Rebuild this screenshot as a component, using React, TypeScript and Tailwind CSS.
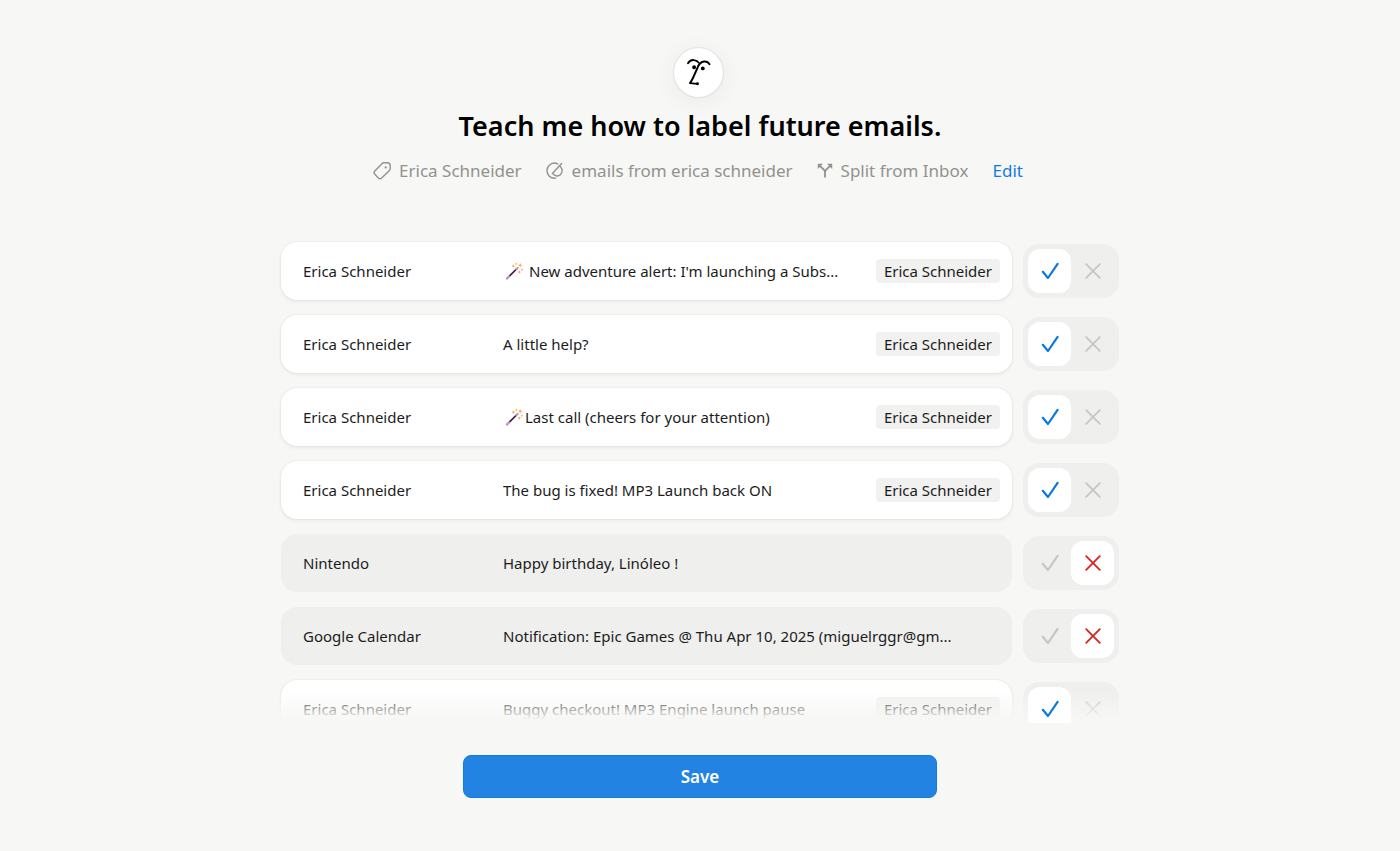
import { useState } from 'react';
import clsx from 'clsx';

interface Email {
    id: number;
    from: string;
    subject: string;
    wand?: 'spaced' | 'tight';
    matches: boolean;
}

const LABEL = 'Erica Schneider';

const initialEmails: Email[] = [
    { id: 1, from: 'Erica Schneider', subject: "New adventure alert: I'm launching a Subs...", wand: 'spaced', matches: true },
    { id: 2, from: 'Erica Schneider', subject: 'A little help?', matches: true },
    { id: 3, from: 'Erica Schneider', subject: 'Last call (cheers for your attention)', wand: 'tight', matches: true },
    { id: 4, from: 'Erica Schneider', subject: 'The bug is fixed! MP3 Launch back ON', matches: true },
    { id: 5, from: 'Nintendo', subject: 'Happy birthday, Linóleo !', matches: false },
    { id: 6, from: 'Google Calendar', subject: 'Notification: Epic Games @ Thu Apr 10, 2025 (miguelrggr@gm...', matches: false },
    { id: 7, from: 'Erica Schneider', subject: 'Buggy checkout! MP3 Engine launch pause', matches: true },
];

function FaceLogo() {
    return (
        <svg width="28" height="30" viewBox="0 0 28 30" fill="none" stroke="black" strokeWidth="1.9" strokeLinecap="round" strokeLinejoin="round" aria-hidden="true">
            <path d="M4 5.2C5.5 2.8 8 1.8 10 2.1C12.2 2.3 13.8 3.2 14.6 4.6" />
            <path d="M25.5 6.2C24.2 4.2 22.3 3.3 20.2 3.5C16.5 3.8 14.6 6.5 13.4 10L9.2 19.5C8.2 21.8 7 23.6 6 25.1L13.3 25.9" />
            <circle cx="10.1" cy="9.2" r="1" fill="black" />
            <circle cx="18.8" cy="10.4" r="1" fill="black" />
            <circle cx="13.5" cy="25.8" r="0.5" fill="black" />
        </svg>
    );
}

function TagIcon() {
    return (
        <svg width="18" height="18" viewBox="0 0 18 18" fill="none" stroke="currentColor" strokeWidth="1.4" strokeLinejoin="round" aria-hidden="true">
            <path d="M9.2 1.5C9.7 1 10.3 .8 11 .8H14.2C15.9 .8 17.2 2.1 17.2 3.8V6.5C17.2 7.2 16.9 7.9 16.4 8.4L8.7 15.9C7.7 16.9 6.4 16.9 5.4 15.9L1.8 12.3C.8 11.3 .8 10.1 1.8 9.1Z" />
            <circle cx="12.7" cy="5.4" r="1.1" fill="currentColor" stroke="none" />
        </svg>
    );
}

function TargetPenIcon() {
    return (
        <svg width="18" height="18" viewBox="0 0 18 18" fill="none" stroke="currentColor" strokeWidth="1.4" strokeLinecap="round" strokeLinejoin="round" aria-hidden="true">
            <path d="M11.8 1.9C8.8 .5 5.4 1.1 3.1 3.4C.3 6.3 .3 10.9 3.1 13.9C4.9 15.8 7.4 16.5 9.7 16.1" />
            <path d="M15.6 1.5L6.4 11.4M14.4 4.6C16.8 7.3 16.7 11 14.2 12.9C11.8 14.6 8.6 14 6.4 11.4" />
        </svg>
    );
}

function SplitIcon() {
    return (
        <svg width="16" height="16" viewBox="0 0 16 16" fill="none" stroke="currentColor" strokeWidth="1.8" aria-hidden="true">
            <path d="M8 14.5V9.5C8 8.3 7.6 7.5 6.8 6.7L2.6 2.6M8 9.5C8 8.3 8.4 7.5 9.2 6.7L13.4 2.6" />
            <path d="M.8 .8H6L.8 6ZM15.2 .8H10L15.2 6Z" fill="currentColor" stroke="none" />
        </svg>
    );
}

function WandIcon() {
    return (
        <svg width="22" height="20" viewBox="-1 0 22 20" className="shrink-0" role="img" aria-label="magic wand">
            <path d="M3 17.5L13.5 7" stroke="#4a1450" strokeWidth="1.7" strokeLinecap="round" />
            <path d="M3 17.5L5 15.5M12.3 8.2L13.5 7" stroke="#b99cc4" strokeWidth="1.8" strokeLinecap="round" />
            <g fill="#fbab5e">
                <path d="M16.2 2L16.9 3.6L18.5 4.3L16.9 5L16.2 6.6L15.5 5L13.9 4.3L15.5 3.6Z" />
                <path d="M9.3 3.2L9.9 4.5L11.2 5.1L9.9 5.7L9.3 7L8.7 5.7L7.4 5.1L8.7 4.5Z" />
                <path d="M15.3 9.2L15.9 10.5L17.2 11.1L15.9 11.7L15.3 13L14.7 11.7L13.4 11.1L14.7 10.5Z" />
                <circle cx="12.3" cy="2.9" r="0.9" />
                <circle cx="17.9" cy="8.7" r="0.9" />
            </g>
        </svg>
    );
}

function CheckIcon() {
    return (
        <svg width="18" height="18" viewBox="0 0 18 18" fill="none" stroke="currentColor" strokeWidth="2.2" strokeLinecap="round" strokeLinejoin="round" aria-hidden="true">
            <path d="M1.8 9.8L7 16L16.6 1.8" />
        </svg>
    );
}

function CrossIcon() {
    return (
        <svg width="16" height="16" viewBox="0 0 16 16" fill="none" stroke="currentColor" strokeWidth="1.8" strokeLinecap="round" aria-hidden="true">
            <path d="M1.2 1.2L14.8 14.8M14.8 1.2L1.2 14.8" />
        </svg>
    );
}

function EmailRow({ email, onChange }: { email: Email; onChange: (matches: boolean) => void }) {
    return (
        <li className="flex items-center gap-[11px]">
            <div
                className={clsx(
                    'flex h-[58px] min-w-0 flex-1 items-center rounded-2xl pl-[22px] pr-3 text-[15px] leading-6 text-[#1c1c1c]',
                    email.matches ? 'bg-white shadow-[0_0_2px_rgba(0,0,0,0.12),0_2px_4px_rgba(0,0,0,0.05)]' : 'bg-[#efefee]'
                )}
            >
                <span className="w-[200px] shrink-0 truncate">{email.from}</span>
                <span className={clsx('flex min-w-0 flex-1 items-center', email.wand === 'spaced' && 'gap-1')}>
                    {email.wand && <WandIcon />}
                    <span className="truncate">{email.subject}</span>
                </span>
                {email.matches && (
                    <span className="ml-4 shrink-0 rounded-sm bg-[#f1f1f0] px-2">{LABEL}</span>
                )}
            </div>
            <div className="flex h-[54px] shrink-0 items-center rounded-2xl bg-[#efefee] px-[5px]">
                <button
                    type="button"
                    aria-label={`Label "${email.subject}"`}
                    aria-pressed={email.matches}
                    onClick={() => onChange(true)}
                    className={clsx(
                        'flex h-11 w-[43px] items-center justify-center rounded-xl',
                        email.matches ? 'relative z-20 bg-white text-[#0878e2]' : 'text-[#c6c6c5]'
                    )}
                >
                    <CheckIcon />
                </button>
                <button
                    type="button"
                    aria-label={`Do not label "${email.subject}"`}
                    aria-pressed={!email.matches}
                    onClick={() => onChange(false)}
                    className={clsx(
                        'flex h-11 w-[43px] items-center justify-center rounded-xl',
                        email.matches ? 'text-[#c6c6c5]' : 'relative z-20 bg-white text-[#d9231f]'
                    )}
                >
                    <CrossIcon />
                </button>
            </div>
        </li>
    );
}

export default function App() {
    const [emails, setEmails] = useState(initialEmails);

    const setMatches = (id: number, matches: boolean) => {
        setEmails(emails.map((e) => (e.id === id ? { ...e, matches } : e)));
    };

    return (
        <main className="flex h-screen flex-col items-center bg-[#f7f7f5] px-6 pt-12 font-['Noto_Sans',sans-serif]">
            <header className="flex flex-col items-center">
                <div className="mr-1 flex h-[49px] w-[49px] items-center justify-center rounded-full bg-white shadow-[0_0_2px_rgba(0,0,0,0.2),0_4px_24px_rgba(0,0,0,0.06)]">
                    <FaceLogo />
                </div>
                <h1 className="mt-2 text-[27px] leading-[42px] font-semibold text-black">Teach me how to label future emails.</h1>
                <div className="mt-2 mr-1 flex items-center gap-6 text-[17px] leading-8 text-[#92928f]">
                    <span className="flex items-center gap-2"><TagIcon />Erica Schneider</span>
                    <span className="flex items-center gap-2"><TargetPenIcon />emails from erica schneider</span>
                    <span className="flex items-center gap-2"><SplitIcon />Split from Inbox</span>
                    <a href="#edit" className="text-[#0f7ce4]">Edit</a>
                </div>
            </header>

            <section className="relative mt-10 min-h-0 w-full max-w-[846px] flex-1 overflow-hidden">
                <ul className="flex h-full flex-col gap-[15px] overflow-y-auto px-1 pt-[15px] [scrollbar-width:none]">
                    {emails.map((email) => (
                        <EmailRow key={email.id} email={email} onChange={(matches) => setMatches(email.id, matches)} />
                    ))}
                </ul>
                <div className="pointer-events-none absolute inset-x-0 bottom-0 z-10 h-8 bg-linear-to-b from-[#f7f7f5]/0 to-[#f7f7f5] to-90%" />
            </section>

            <button type="button" className="mt-8 mb-[53px] h-[43px] w-full max-w-[474px] shrink-0 rounded-lg border border-[#0f7ce4] bg-[#2383e2] text-[17px] font-semibold text-white">
                Save
            </button>
        </main>
    );
}
